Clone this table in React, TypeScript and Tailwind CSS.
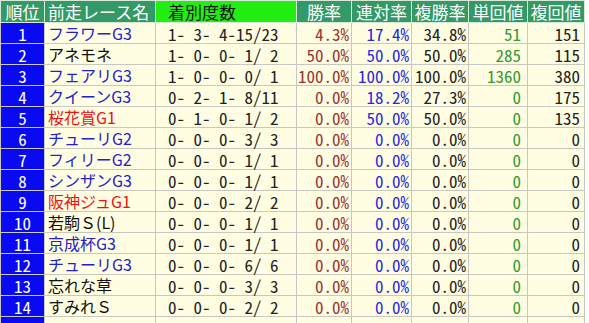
const JP = "font-['Noto_Sans_CJK_JP','Liberation_Sans',sans-serif]";
const MONO = "font-['Noto_Sans_Mono_CJK_JP','Liberation_Mono','Noto_Sans_CJK_JP',monospace]";

type Row = {
  rank: number;
  race: string;
  grade: "g1" | "g" | "none";
  record: string;
  win: string;
  ren: string;
  fuku: string;
  tan: string;
  fukuVal: string;
};

const ROWS: Row[] = [
  { rank: 1, race: "フラワーG3", grade: "g", record: "1- 3- 4-15/23", win: "4.3%", ren: "17.4%", fuku: "34.8%", tan: "51", fukuVal: "151" },
  { rank: 2, race: "アネモネ", grade: "none", record: "1- 0- 0- 1/ 2", win: "50.0%", ren: "50.0%", fuku: "50.0%", tan: "285", fukuVal: "115" },
  { rank: 3, race: "フェアリG3", grade: "g", record: "1- 0- 0- 0/ 1", win: "100.0%", ren: "100.0%", fuku: "100.0%", tan: "1360", fukuVal: "380" },
  { rank: 4, race: "クイーンG3", grade: "g", record: "0- 2- 1- 8/11", win: "0.0%", ren: "18.2%", fuku: "27.3%", tan: "0", fukuVal: "175" },
  { rank: 5, race: "桜花賞G1", grade: "g1", record: "0- 1- 0- 1/ 2", win: "0.0%", ren: "50.0%", fuku: "50.0%", tan: "0", fukuVal: "135" },
  { rank: 6, race: "チューリG2", grade: "g", record: "0- 0- 0- 3/ 3", win: "0.0%", ren: "0.0%", fuku: "0.0%", tan: "0", fukuVal: "0" },
  { rank: 7, race: "フィリーG2", grade: "g", record: "0- 0- 0- 1/ 1", win: "0.0%", ren: "0.0%", fuku: "0.0%", tan: "0", fukuVal: "0" },
  { rank: 8, race: "シンザンG3", grade: "g", record: "0- 0- 0- 1/ 1", win: "0.0%", ren: "0.0%", fuku: "0.0%", tan: "0", fukuVal: "0" },
  { rank: 9, race: "阪神ジュG1", grade: "g1", record: "0- 0- 0- 2/ 2", win: "0.0%", ren: "0.0%", fuku: "0.0%", tan: "0", fukuVal: "0" },
  { rank: 10, race: "若駒Ｓ(L)", grade: "none", record: "0- 0- 0- 1/ 1", win: "0.0%", ren: "0.0%", fuku: "0.0%", tan: "0", fukuVal: "0" },
  { rank: 11, race: "京成杯G3", grade: "g", record: "0- 0- 0- 1/ 1", win: "0.0%", ren: "0.0%", fuku: "0.0%", tan: "0", fukuVal: "0" },
  { rank: 12, race: "チューリG3", grade: "g", record: "0- 0- 0- 6/ 6", win: "0.0%", ren: "0.0%", fuku: "0.0%", tan: "0", fukuVal: "0" },
  { rank: 13, race: "忘れな草", grade: "none", record: "0- 0- 0- 3/ 3", win: "0.0%", ren: "0.0%", fuku: "0.0%", tan: "0", fukuVal: "0" },
  { rank: 14, race: "すみれＳ", grade: "none", record: "0- 0- 0- 2/ 2", win: "0.0%", ren: "0.0%", fuku: "0.0%", tan: "0", fukuVal: "0" },
];

const raceColor = { g1: "text-[#ee1111]", g: "text-[#2222cc]", none: "text-[#111111]" };

const td = "border border-[#c8c8c0] h-[21px] p-0 leading-none";
const th = "border border-[#d8e8d8] h-[22px] p-0 font-normal leading-none";

export default function App() {
  return (
    <div className="w-[589px] h-[323px] overflow-hidden bg-white">
      <table className={`border-collapse table-fixed w-[584px] ${JP}`}>
        <colgroup>
          <col className="w-[44px]" />
          <col className="w-[111px]" />
          <col className="w-[141px]" />
          <col className="w-[55px]" />
          <col className="w-[60px]" />
          <col className="w-[57px]" />
          <col className="w-[59px]" />
          <col className="w-[57px]" />
        </colgroup>
        <thead>
          <tr className="text-[17px]">
            <th className={`${th} bg-[#339966] text-white text-center`}>順位</th>
            <th className={`${th} bg-[#339966] text-white text-left pl-[3px]`}>前走レース名</th>
            <th className={`${th} bg-[#22ee11] text-[#111] text-left pl-[12px]`}>着別度数</th>
            <th className={`${th} bg-[#339966] text-white text-center`}>勝率</th>
            <th className={`${th} bg-[#339966] text-white text-center`}>連対率</th>
            <th className={`${th} bg-[#339966] text-white text-center`}>複勝率</th>
            <th className={`${th} bg-[#339966] text-white text-center`}>単回値</th>
            <th className={`${th} bg-[#339966] text-white text-center`}>複回値</th>
          </tr>
        </thead>
        <tbody>
          {ROWS.map((r) => (
            <tr key={r.rank} className="bg-[#fffee2]">
              <td className={`${td} bg-[#0a0af0] text-white text-center ${MONO} text-[17px]`}>{r.rank}</td>
              <td className={`${td} ${raceColor[r.grade]} text-[16px] pl-[3px] whitespace-nowrap overflow-hidden`}>{r.race}</td>
              <td className={`${td} ${MONO} text-[17px] text-[#222] pl-[12px] whitespace-pre`}>{r.record}</td>
              <td className={`${td} ${MONO} text-[17px] text-[#993333] text-right pr-[2px] whitespace-nowrap`}>{r.win}</td>
              <td className={`${td} ${MONO} text-[17px] text-[#2828dd] text-right pr-[2px] whitespace-nowrap`}>{r.ren}</td>
              <td className={`${td} ${MONO} text-[17px] text-[#222] text-right pr-[2px] whitespace-nowrap`}>{r.fuku}</td>
              <td className={`${td} ${MONO} text-[17px] text-[#339933] text-right pr-[6px]`}>{r.tan}</td>
              <td className={`${td} ${MONO} text-[17px] text-[#222] text-right pr-[4px]`}>{r.fukuVal}</td>
            </tr>
          ))}
          <tr className="bg-[#fffee2]">
            <td className={`${td} bg-[#0a0af0]`} />
            <td className={td} />
            <td className={td} />
            <td className={td} />
            <td className={td} />
            <td className={td} />
            <td className={td} />
            <td className={td} />
          </tr>
        </tbody>
      </table>
    </div>
  );
}
